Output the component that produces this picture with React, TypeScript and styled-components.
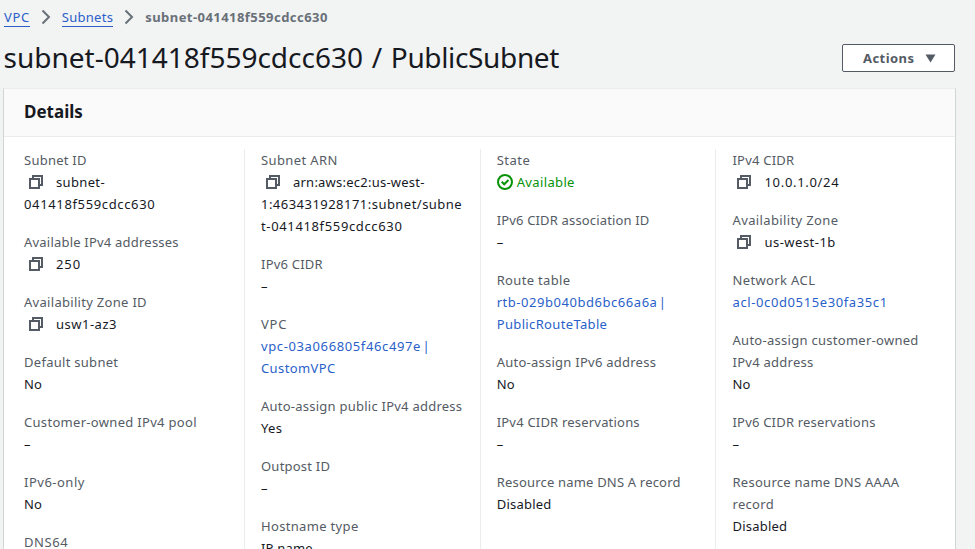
import React from 'react';
import styled, { createGlobalStyle } from 'styled-components';

const GlobalStyle = createGlobalStyle`
  *, *::before, *::after { box-sizing: border-box; }
  html, body { margin: 0; overflow: hidden; background: #f2f3f3; }
  body {
    font-family: "Noto Sans", "Open Sans", sans-serif;
    font-size: 13px;
    line-height: 22px;
    color: #16191f;
  }
`;

const Page = styled.main`
  height: 549px;
  overflow: hidden;
  padding: 6px 19px 0 3px;
`;

const Breadcrumbs = styled.nav`
  display: flex;
  align-items: center;
  height: 22px;
  padding-left: 1px;
`;

const Crumb = styled.a<{ $tracking: number }>`
  color: #2a5fc9;
  letter-spacing: ${(p) => p.$tracking}px;
  line-height: 18px;
  height: 19px;
  border-bottom: 1px solid #2a5fc9;
`;

const CurrentCrumb = styled.span`
  color: #687078;
  font-weight: 700;
  letter-spacing: 0.45px;
`;

const Separator = styled.svg`
  width: 10px;
  height: 16px;
  margin: 0 11px 1px;
  fill: none;
  stroke: #687078;
  stroke-width: 2;
`;

const TitleBar = styled.header`
  display: flex;
  justify-content: space-between;
  align-items: center;
  height: 60px;
  padding: 0 1px 0 0.5px;
`;

const Title = styled.h1`
  margin: 0 0 2px;
  font-size: 28px;
  font-weight: 400;
  line-height: 36px;
  word-spacing: 1.4px;
`;

const TitleName = styled.span`
  letter-spacing: -0.35px;
`;

const ActionsButton = styled.button`
  display: flex;
  align-items: center;
  justify-content: space-between;
  width: 113px;
  height: 28px;
  padding: 0 18px 0 20px;
  border: 1px solid #545b64;
  border-radius: 2px;
  background: #fff;
  color: #545b64;
  font: 700 13px/22px "Noto Sans", sans-serif;
  letter-spacing: 0.45px;
`;

const Caret = styled.svg`
  width: 11px;
  height: 9px;
  fill: #545b64;
`;

const Panel = styled.section`
  height: 600px;
  width: 953px;
  background: #fff;
  border: 1px solid #d0d5d5;
  border-top-color: #eaeded;
`;

const PanelHeader = styled.div`
  display: flex;
  align-items: center;
  height: 48px;
  padding: 0 20px 2px;
  background: #fafafa;
  border-bottom: 1px solid #eaeded;
`;

const PanelTitle = styled.h2`
  margin: 0;
  font-size: 17px;
  line-height: 22px;
  font-weight: 700;
`;

const Columns = styled.div`
  display: grid;
  grid-template-columns: 220px 235.7px 235.8px 220px;
  padding: 12px 20px 0;
`;

const Column = styled.div`
  display: flex;
  flex-direction: column;
  gap: 16px;
  min-height: 500px;

  & + & {
    padding-left: 16px;
    border-left: 1px solid #eaeded;
  }
`;

const Line = styled.div<{ $tracking?: number }>`
  height: 22px;
  white-space: nowrap;
  letter-spacing: ${(p) => p.$tracking ?? 0.3}px;
`;

const Label = styled(Line)`
  color: #545b64;
`;

const Value = styled(Line)<{ $tone?: Tone }>`
  display: flex;
  align-items: center;
  word-spacing: ${(p) => (p.$tone === 'link' ? '-2.6px' : 'normal')};
  color: ${(p) => (p.$tone === 'link' ? '#2a5fc9' : p.$tone === 'ok' ? '#079207' : '#16191f')};
`;

const CopyGlyph = styled.svg`
  width: 14px;
  height: 14px;
  margin: 0 13px 0 5px;
  fill: none;
  stroke: #545b64;
  stroke-width: 2;
`;

const StatusGlyph = styled.svg`
  width: 16px;
  height: 16px;
  margin-right: 4px;
  fill: none;
  stroke: #079207;
  stroke-width: 2;
`;

type Tone = 'link' | 'ok';
type TextLine = [text: string, tracking?: number];
interface Field {
  label: TextLine[];
  value: TextLine[];
  copy?: boolean;
  tone?: Tone;
}

const dash: TextLine[] = [['–', 0]];

const columns: Field[][] = [
  [
    { label: [['Subnet ID', 0.24]], value: [['subnet-', 0.35], ['041418f559cdcc630', 0.64]], copy: true },
    { label: [['Available IPv4 addresses', 0.21]], value: [['250', 0.9]], copy: true },
    { label: [['Availability Zone ID', 0.3]], value: [['usw1-az3', 0.5]], copy: true },
    { label: [['Default subnet', 0.28]], value: [['No', 0.2]] },
    { label: [['Customer-owned IPv4 pool', 0.31]], value: dash },
    { label: [['IPv6-only', 0.5]], value: [['No', 0.2]] },
    { label: [['DNS64', 0.6]], value: [] },
  ],
  [
    {
      label: [['Subnet ARN', 0.38]],
      value: [['arn:aws:ec2:us-west-', 0.23], ['1:463431928171:subnet/subne', 0.47], ['t-041418f559cdcc630', 0.64]],
      copy: true,
    },
    { label: [['IPv6 CIDR', 0.22]], value: dash },
    { label: [['VPC', 0.8]], value: [['vpc-03a066805f46c497e |', 0.62], ['CustomVPC', 0.4]], tone: 'link' },
    { label: [['Auto-assign public IPv4 address', 0.24]], value: [['Yes', 0.3]] },
    { label: [['Outpost ID', 0.22]], value: dash },
    { label: [['Hostname type', 0.33]], value: [['IP name', 0.2]] },
  ],
  [
    { label: [['State', 0.5]], value: [['Available', 0.36]], tone: 'ok' },
    { label: [['IPv6 CIDR association ID', 0.16]], value: dash },
    { label: [['Route table', 0.33]], value: [['rtb-029b040bd6bc66a6a |', 0.54], ['PublicRouteTable', 0.35]], tone: 'link' },
    { label: [['Auto-assign IPv6 address', 0.25]], value: [['No', 0.2]] },
    { label: [['IPv4 CIDR reservations', 0.2]], value: dash },
    { label: [['Resource name DNS A record', 0.19]], value: [['Disabled', 0.22]] },
  ],
  [
    { label: [['IPv4 CIDR', 0.22]], value: [['10.0.1.0/24', 0.68]], copy: true },
    { label: [['Availability Zone', 0.37]], value: [['us-west-1b', 0.48]], copy: true },
    { label: [['Network ACL', 0.37]], value: [['acl-0c0d0515e30fa35c1', 0.61]], tone: 'link' },
    { label: [['Auto-assign customer-owned', 0.28], ['IPv4 address', 0.26]], value: [['No', 0.2]] },
    { label: [['IPv6 CIDR reservations', 0.2]], value: dash },
    { label: [['Resource name DNS AAAA', 0.27], ['record', 0.3]], value: [['Disabled', 0.22]] },
  ],
];

const CopyIcon = () => (
  <CopyGlyph viewBox="0 0 14 14">
    <path d="M1 4h9v9H1z" />
    <path d="M4 4V1h9v9h-3" />
  </CopyGlyph>
);

const StatusIcon = () => (
  <StatusGlyph viewBox="0 0 16 16">
    <circle cx="8" cy="8" r="7" />
    <path d="M4.7 7.8l2.5 2.5 4.3-4.3" />
  </StatusGlyph>
);

const Chevron = () => (
  <Separator viewBox="0 0 10 16">
    <path d="M1.5 1.5L8 8l-6.5 6.5" />
  </Separator>
);

const FieldView = ({ label, value, copy, tone }: Field) => (
  <div>
    {label.map(([text, tracking]) => (
      <Label key={text} $tracking={tracking}>{text}</Label>
    ))}
    {value.map(([text, tracking], i) => (
      <Value key={text} $tracking={tracking} $tone={tone}>
        {i === 0 && copy && <CopyIcon />}
        {i === 0 && tone === 'ok' && <StatusIcon />}
        {text}
      </Value>
    ))}
  </div>
);

export default function App() {
  return (
    <>
      <GlobalStyle />
      <Page>
        <Breadcrumbs>
          <Crumb $tracking={0.65}>VPC</Crumb>
          <Chevron />
          <Crumb $tracking={0.27}>Subnets</Crumb>
          <Chevron />
          <CurrentCrumb>subnet-041418f559cdcc630</CurrentCrumb>
        </Breadcrumbs>
        <TitleBar>
          <Title>subnet-041418f559cdcc630 / <TitleName>PublicSubnet</TitleName></Title>
          <ActionsButton>
            Actions
            <Caret viewBox="0 0 11 9">
              <path d="M0.5 0.5h10L5.5 8.5z" />
            </Caret>
          </ActionsButton>
        </TitleBar>
        <Panel>
          <PanelHeader>
            <PanelTitle>Details</PanelTitle>
          </PanelHeader>
          <Columns>
            {columns.map((fields, i) => (
              <Column key={i}>
                {fields.map((field) => (
                  <FieldView key={field.label[0][0]} {...field} />
                ))}
              </Column>
            ))}
          </Columns>
        </Panel>
      </Page>
    </>
  );
}
